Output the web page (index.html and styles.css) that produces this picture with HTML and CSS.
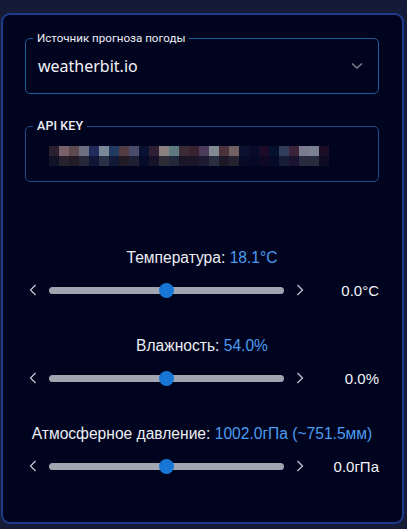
FILE: index.html
```html
<!DOCTYPE html>
<html lang="ru">
<head>
<meta charset="utf-8">
<title>Weather settings</title>
<link rel="stylesheet" href="styles.css">
</head>
<body>
<div class="card">
  <div class="field field-select">
    <span class="field-label">Источник прогноза погоды</span>
    <span class="field-value">weatherbit.io</span>
    <svg class="chevron" width="12" height="8" viewBox="0 0 12 8"><path d="M1 1.5 L6 6 L11 1.5" fill="none" stroke="#7b7d8c" stroke-width="1.6"/></svg>
  </div>
  <div class="field field-key">
    <span class="field-label label-bold">API KEY</span>
    <div class="blur"></div>
  </div>

  <div class="sliders">
    <section class="slider-block">
      <div class="slider-title">Температура: <span class="accent">18.1°C</span></div>
      <div class="slider-row">
        <span class="arrow"><svg width="8" height="12" viewBox="0 0 8 12"><path d="M6.5 1 L1.5 6 L6.5 11" fill="none" stroke="#c9cbd4" stroke-width="1.2"/></svg></span>
        <div class="track"><span class="thumb"></span></div>
        <span class="arrow"><svg width="8" height="12" viewBox="0 0 8 12"><path d="M1.5 1 L6.5 6 L1.5 11" fill="none" stroke="#c9cbd4" stroke-width="1.2"/></svg></span>
        <span class="slider-value">0.0°C</span>
      </div>
    </section>
    <section class="slider-block">
      <div class="slider-title">Влажность: <span class="accent">54.0%</span></div>
      <div class="slider-row">
        <span class="arrow"><svg width="8" height="12" viewBox="0 0 8 12"><path d="M6.5 1 L1.5 6 L6.5 11" fill="none" stroke="#c9cbd4" stroke-width="1.2"/></svg></span>
        <div class="track"><span class="thumb"></span></div>
        <span class="arrow"><svg width="8" height="12" viewBox="0 0 8 12"><path d="M1.5 1 L6.5 6 L1.5 11" fill="none" stroke="#c9cbd4" stroke-width="1.2"/></svg></span>
        <span class="slider-value">0.0%</span>
      </div>
    </section>
    <section class="slider-block">
      <div class="slider-title">Атмосферное давление: <span class="accent">1002.0гПа (~751.5мм)</span></div>
      <div class="slider-row">
        <span class="arrow"><svg width="8" height="12" viewBox="0 0 8 12"><path d="M6.5 1 L1.5 6 L6.5 11" fill="none" stroke="#c9cbd4" stroke-width="1.2"/></svg></span>
        <div class="track"><span class="thumb"></span></div>
        <span class="arrow"><svg width="8" height="12" viewBox="0 0 8 12"><path d="M1.5 1 L6.5 6 L1.5 11" fill="none" stroke="#c9cbd4" stroke-width="1.2"/></svg></span>
        <span class="slider-value">0.0гПа</span>
      </div>
    </section>
  </div>
</div>
</body>
</html>
```

FILE: styles.css
```css
* { box-sizing: border-box; }
html, body { margin: 0; padding: 0; }
body {
  background: #151a37;
  font-family: "Liberation Sans", Arial, sans-serif;
  color: #e8eaf0;
  width: 407px;
  height: 529px;
  overflow: hidden;
}
.card {
  margin: 13px 0 0 1px;
  width: 403px;
  height: 511px;
  border: 2px solid #1f3a88;
  border-radius: 9px;
  background: #01041f;
  padding: 23px 23px 0 22px;
}
.field {
  position: relative;
  height: 56px;
  border: 1px solid #1e5a9e;
  border-radius: 5px;
  display: flex;
  align-items: center;
}
.field-key {
  margin-top: 32px;
  border-color: #1d4a8c;
}
.field-label {
  position: absolute;
  top: -9px;
  left: 7px;
  padding: 0 4px;
  background: #01041f;
  font-family: Roboto, sans-serif;
  font-size: 11.6px;
  line-height: 16px;
  color: #eceef4;
}
.label-bold {
  font-weight: 500;
  font-size: 12.5px;
  letter-spacing: 0.1px;
}
.field-value {
  padding-left: 12px;
  font-family: "Noto Sans", sans-serif;
  font-size: 16px;
  color: #f2f3f7;
  flex: 1;
}
.chevron {
  margin-right: 15px;
}
.blur {
  margin-left: 23px;
  margin-top: 3px;
  width: 280px;
  height: 20px;
  background:
    linear-gradient(to right,
      #2a2032 0 10px, #7a6167 10px 20px, #5d4a51 20px 30px, #6e7081 30px 40px,
      #222c5c 40px 50px, #7a8899 50px 60px, #213a5f 60px 70px, #533b42 70px 80px,
      #4b4b6b 80px 90px, #0b1132 90px 100px, #2f1f35 100px 110px, #8b8181 110px 120px,
      #5f7981 120px 130px, #3b2b35 130px 140px, #3a2132 140px 150px, #4b3b5b 150px 160px,
      #818991 160px 170px, #4b3139 170px 180px, #716161 180px 190px, #0d1131 190px 200px,
      #070b29 200px 210px, #1b0b29 210px 220px, #03112f 220px 230px, #313d5b 230px 240px,
      #3b2339 240px 250px, #7b7b8f 250px 260px, #7b8191 260px 270px, #1b0d25 270px 280px)
      top / 100% 10px no-repeat,
    linear-gradient(to right,
      #121226 0 10px, #26222f 10px 20px, #221c27 20px 30px, #262839 30px 40px,
      #111638 40px 50px, #283146 50px 60px, #101a36 60px 70px, #201a26 70px 80px,
      #1e1e34 80px 90px, #070b2a 90px 100px, #16122a 100px 110px, #2e2c36 110px 120px,
      #20283a 120px 130px, #1a1628 130px 140px, #1a1428 140px 150px, #1c1a31 150px 160px,
      #292f40 160px 170px, #1d1828 170px 180px, #25222f 180px 190px, #070b28 190px 200px,
      #050826 200px 210px, #0e0826 210px 220px, #030b29 220px 230px, #161c35 230px 240px,
      #1a1330 240px 250px, #282a3d 250px 260px, #282b3e 260px 270px, #0e0a24 270px 280px)
      bottom / 100% 10px no-repeat;
}
.sliders {
  margin-top: 66px;
  display: flex;
  flex-direction: column;
  gap: 36px;
}
.slider-title {
  text-align: center;
  font-size: 15.6px;
  line-height: 20px;
  color: #eceef4;
}
.accent { color: #4b9cf0; }
.slider-row {
  margin-top: 12px;
  height: 20px;
  display: flex;
  align-items: center;
}
.arrow {
  width: 16px;
  height: 20px;
  display: flex;
  align-items: center;
  justify-content: center;
}
.track {
  position: relative;
  flex: 1;
  height: 7px;
  margin: 0 8px;
  border-radius: 4px;
  background: #a1a5b0;
}
.thumb {
  position: absolute;
  left: 50%;
  top: 50%;
  width: 15px;
  height: 15px;
  margin: -7.5px 0 0 -7.5px;
  border-radius: 50%;
  background: #1677d6;
}
.slider-value {
  width: 71px;
  text-align: right;
  font-size: 15px;
  color: #f2f3f7;
}
```
